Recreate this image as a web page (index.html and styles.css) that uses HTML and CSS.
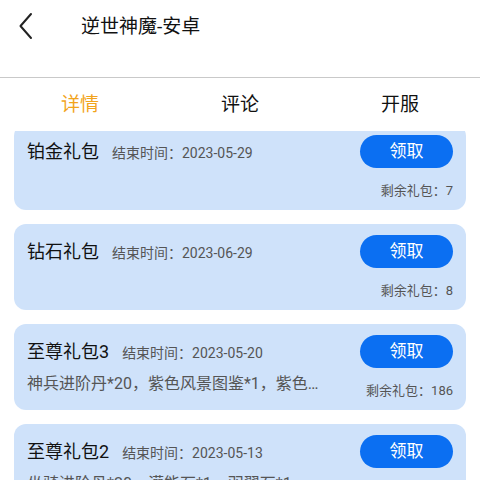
FILE: index.html
```html
<!DOCTYPE html>
<html lang="zh-CN">
<head>
<meta charset="utf-8">
<title>逆世神魔-安卓</title>
<link rel="stylesheet" href="styles.css">
</head>
<body>
<div class="page">
  <header class="topbar">
    <span class="back">
      <svg width="16" height="28" viewBox="0 0 16 28"><path d="M13 2 L2.5 14 L13 26" fill="none" stroke="#222" stroke-width="2" stroke-linecap="round" stroke-linejoin="round"/></svg>
    </span>
    <h1 class="title">逆世神魔-安卓</h1>
  </header>
  <nav class="tabs">
    <span class="tab active">详情</span>
    <span class="tab">评论</span>
    <span class="tab">开服</span>
  </nav>
  <main class="list">
    <div class="card first">
      <div class="info">
        <div class="head"><span class="name">铂金礼包</span><span class="date">结束时间：2023-05-29</span></div>
        <div class="desc"></div>
      </div>
      <div class="side">
        <button class="get">领取</button>
        <span class="left">剩余礼包：7</span>
      </div>
    </div>
    <div class="card">
      <div class="info">
        <div class="head"><span class="name">钻石礼包</span><span class="date">结束时间：2023-06-29</span></div>
        <div class="desc"></div>
      </div>
      <div class="side">
        <button class="get">领取</button>
        <span class="left">剩余礼包：8</span>
      </div>
    </div>
    <div class="card">
      <div class="info">
        <div class="head"><span class="name">至尊礼包3</span><span class="date">结束时间：2023-05-20</span></div>
        <div class="desc">神兵进阶丹*20，紫色风景图鉴*1，紫色风景图鉴*1，紫色坐骑</div>
      </div>
      <div class="side">
        <button class="get">领取</button>
        <span class="left">剩余礼包：186</span>
      </div>
    </div>
    <div class="card">
      <div class="info">
        <div class="head"><span class="name">至尊礼包2</span><span class="date">结束时间：2023-05-13</span></div>
        <div class="desc">坐骑进阶丹*20，灌能石*1，羽翼石*1</div>
      </div>
      <div class="side">
        <button class="get">领取</button>
        <span class="left">剩余礼包：120</span>
      </div>
    </div>
  </main>
</div>
</body>
</html>
```
FILE: styles.css
```css
* { box-sizing: border-box; }
html, body { margin: 0; padding: 0; background: #fff; }
body {
  font-family: Roboto, "Noto Sans CJK SC", "Noto Sans", sans-serif;
  color: #111;
  width: 480px;
  height: 480px;
  overflow: hidden;
}
.page { display: flex; flex-direction: column; height: 480px; }
.topbar {
  height: 78px;
  border-bottom: 1px solid #c9c9c9;
  display: flex;
  align-items: flex-start;
  padding: 12px 0 0 18px;
}
.back { width: 16px; height: 28px; display: block; }
.back svg { display: block; }
.title {
  margin: 0 0 0 47px;
  font-size: 19px;
  font-weight: normal;
  line-height: 30px;
  color: #111;
}
.tabs {
  height: 53px;
  display: grid;
  grid-template-columns: 1fr 1fr 1fr;
  align-items: center;
  text-align: center;
  font-size: 19px;
  font-weight: normal;
  line-height: 26px;
  color: #111;
}
.tab.active { color: #f2a41c; }
.list {
  flex: 1;
  overflow: hidden;
  display: flex;
  flex-direction: column;
  gap: 14px;
  padding: 0 14px;
}
.card {
  flex: none;
  height: 86px;
  background: #cfe2fa;
  border-radius: 12px;
  display: flex;
  justify-content: space-between;
  padding: 11px 13px 0 13px;
}
.card.first { margin-top: -7px; }
.info { min-width: 0; flex: 1; }
.head { display: flex; align-items: center; height: 30px; }
.name { font-size: 18px; font-weight: normal; color: #111; }
.date { font-size: 14px; color: #555; margin-left: 13px; padding-top: 3px; }
.desc {
  margin-top: 7px;
  font-size: 16px;
  line-height: 24px;
  color: #555;
  width: 306px;
  white-space: nowrap;
  overflow: hidden;
  text-overflow: ellipsis;
}
.side {
  display: flex;
  flex-direction: column;
  align-items: flex-end;
  flex: none;
}
.get {
  width: 93px;
  height: 33px;
  border: none;
  border-radius: 17px;
  background: #0b6ff2;
  color: #fff;
  font-family: inherit;
  font-size: 17px;
  font-weight: normal;
  line-height: 33px;
  padding: 0;
}
.left {
  margin-top: 14px;
  font-size: 13px;
  line-height: 18px;
  color: #555;
}
```
